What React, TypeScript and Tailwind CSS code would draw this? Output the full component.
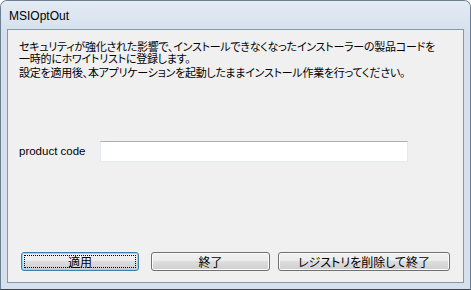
import React from "react";

const jp = "font-['MS_UI_Gothic','Noto_Sans_CJK_JP',sans-serif] [font-feature-settings:'palt']";

function Btn({ label, focused, w }: { label: string; focused?: boolean; w: string }) {
  return (
    <div
      className={`relative h-[19px] ${w} rounded-[3px] border ${
        focused ? "border-[#3c7fb1] shadow-[inset_0_0_0_1px_#8fd8f5]" : "border-[#707070] shadow-[inset_0_0_0_1px_#fcfcfc]"
      } bg-[linear-gradient(to_bottom,#f2f2f2_0%,#ebebeb_50%,#dddddd_50%,#cfcfcf_100%)] flex items-center justify-center`}
    >
      {focused && (
        <div className="absolute inset-[2px] border border-dotted border-black" />
      )}
      <span className={`${jp} text-[12px] leading-[12px] text-black`}>{label}</span>
    </div>
  );
}

export default function App() {
  return (
    <div className="w-[471px] h-[290px] bg-[#d5e1ee] rounded-t-[7px] border border-[#6f7f92] border-b-[#3d4450] flex flex-col">
      <div className="h-[28px] flex items-center pl-[8px] pt-[1px] bg-[linear-gradient(to_bottom,#e3ebf4,#d7e2ee)] rounded-t-[6px]">
        <span className="font-['Liberation_Sans',sans-serif] text-[12px] text-black">MSIOptOut</span>
      </div>
      <div className="ml-[6px] w-[457px] h-[254px] border border-[#8a97a6] bg-[#f0f0f0] flex flex-col">
        <div className={`${jp} text-[11px] tracking-[-0.25px] whitespace-nowrap text-black pl-[11px] pt-[10px]`}>
          <div className="leading-[12px]">セキュリティが強化された影響で、インストールできなくなったインストーラーの製品コードを</div>
          <div className="leading-[12px]">一時的にホワイトリストに登録します。</div>
          <div className="leading-[12px] mt-[2px]">設定を適用後、本アプリケーションを起動したままインストール作業を行ってください。</div>
        </div>
        <div className="flex items-center mt-[63px]">
          <span className="pl-[11px] w-[92px] font-['Liberation_Sans',sans-serif] text-[11.5px] text-black">product code</span>
          <div className="h-[21px] w-[308px] bg-white border border-[#e3e9ef] border-t-[#abadb3]" />
        </div>
        <div className="mt-auto mb-[11px] flex items-center pl-[13px]">
          <Btn label="適用" focused w="w-[118px]" />
          <div className="ml-[12px]">
            <Btn label="終了" w="w-[119px]" />
          </div>
          <div className="ml-[8px]">
            <Btn label="レジストリを削除して終了" w="w-[172px]" />
          </div>
        </div>
      </div>
    </div>
  );
}
